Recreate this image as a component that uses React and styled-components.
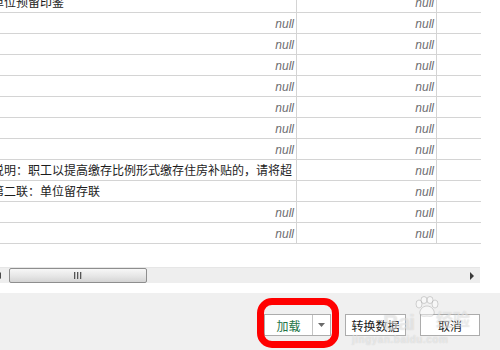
import React from "react";
import styled, { createGlobalStyle } from "styled-components";

const GlobalStyle = createGlobalStyle`
  html, body { margin: 0; padding: 0; background: #ffffff; }
  body { font-family: "Liberation Sans", "Noto Sans CJK SC", sans-serif; }
`;

const Page = styled.div`
  position: relative;
  width: 500px;
  height: 350px;
  overflow: hidden;
  display: flex;
  flex-direction: column;
  background: #ffffff;
`;

const GridArea = styled.div`
  height: 293px;
  display: flex;
  flex-direction: column;
  background: #ffffff;
`;

const GridViewport = styled.div`
  height: 267px;
  overflow: hidden;
`;

const Table = styled.div`
  display: grid;
  grid-template-columns: 308px 140px 44px;
  grid-auto-rows: 21px;
  margin-top: -8px;
  margin-left: -11px;
  width: 492px;
`;

const Cell = styled.div`
  box-sizing: border-box;
  border-bottom: 1px solid #d4d4d4;
  border-right: ${(p) => (p.$last ? "none" : "1px solid #d4d4d4")};
  display: flex;
  align-items: center;
  justify-content: ${(p) => (p.$text ? "flex-start" : "flex-end")};
  padding: ${(p) => (p.$text ? "0 0 0 3px" : "0 2px 0 0")};
  overflow: hidden;
  white-space: nowrap;
`;

const NullText = styled.span`
  font-family: "Liberation Sans", Arial, sans-serif;
  font-style: italic;
  font-size: 12px;
  color: #6c6c70;
  line-height: 20px;
  padding-top: 1px;
`;

const CnText = styled.span`
  font-family: "Noto Sans CJK SC", "Noto Sans", sans-serif;
  font-size: 12px;
  color: #1c1c1c;
  line-height: 20px;
`;

const HScroll = styled.div`
  box-sizing: border-box;
  width: 480px;
  height: 16px;
  background: #eeeeee;
  border-top: 1px solid #e6e6e6;
  display: flex;
  align-items: center;
`;

const ArrowLeft = styled.div`
  width: 9px;
  height: 15px;
  display: flex;
  align-items: center;
  overflow: hidden;
`;

const Thumb = styled.div`
  box-sizing: border-box;
  width: 138px;
  height: 15px;
  border: 1px solid #8e8e8e;
  border-radius: 2px;
  background: linear-gradient(#f7f7f7, #e6e6e6 55%, #d4d4d4);
  display: flex;
  align-items: center;
  justify-content: center;
`;

const Track = styled.div`
  flex: 1;
`;

const ArrowRight = styled.div`
  width: 16px;
  height: 15px;
  display: flex;
  align-items: center;
  justify-content: center;
`;

const Footer = styled.div`
  flex: 1;
  background: #f0f0f0;
  display: flex;
  justify-content: flex-end;
  align-items: flex-start;
  padding: 21px 20px 0 0;
  gap: 14px;
`;

const SplitButton = styled.div`
  box-sizing: border-box;
  height: 22px;
  display: flex;
  border: 1px solid #acacac;
  background: #ffffff;
`;

const SplitMain = styled.div`
  width: 47px;
  border-right: 1px solid #c4c4c4;
  display: flex;
  align-items: center;
  justify-content: center;
  font-family: "Noto Sans CJK SC", sans-serif;
  font-size: 12px;
  color: #227447;
`;

const SplitDrop = styled.div`
  width: 17px;
  display: flex;
  align-items: center;
  justify-content: center;
`;

const Button = styled.div`
  box-sizing: border-box;
  width: ${(p) => p.$w}px;
  height: 22px;
  border: 1px solid #acacac;
  background: #ffffff;
  display: flex;
  align-items: center;
  justify-content: center;
  font-family: "Noto Sans CJK SC", sans-serif;
  font-size: 12px;
  color: #1a1a1a;
`;

const RedMark = styled.div`
  position: absolute;
  left: 257px;
  top: 298px;
  width: 82px;
  height: 50px;
  box-sizing: border-box;
  border: 7px solid #ff0000;
  border-radius: 15px;
`;

const Watermark = styled.div`
  position: absolute;
  left: 350px;
  top: 294px;
  width: 125px;
  height: 56px;
  pointer-events: none;
  color: rgba(255, 255, 255, 0.45);
  text-shadow: 0 0 1px rgba(120, 120, 120, 0.3);
`;

const WmBrand = styled.div`
  position: absolute;
  left: 33px;
  top: 16px;
  font-family: "Liberation Sans", sans-serif;
  font-weight: bold;
  font-size: 22px;
  letter-spacing: -1px;
`;

const WmPaw = styled.svg`
  position: absolute;
  left: 63px;
  top: 2px;
`;

const WmCn = styled.div`
  position: absolute;
  left: 86px;
  top: 12px;
  font-family: "Noto Sans CJK SC", sans-serif;
  font-size: 17px;
  font-weight: bold;
`;

const WmUrl = styled.div`
  position: absolute;
  left: 2px;
  top: 40px;
  font-family: "Liberation Sans", sans-serif;
  font-size: 10px;
  font-weight: bold;
  letter-spacing: 0.5px;
`;

const rows = [
  ["单位预留印鉴", null, ""],
  [null, null, ""],
  [null, null, ""],
  [null, null, ""],
  [null, null, ""],
  [null, null, ""],
  [null, null, ""],
  [null, null, ""],
  ["说明：职工以提高缴存比例形式缴存住房补贴的，请将超", null, ""],
  ["第二联：单位留存联", null, ""],
  [null, null, ""],
  [null, null, ""],
];

function renderCell(v, ci) {
  const last = ci === 2;
  if (v === null) {
    return (
      <Cell key={ci} $last={last}>
        <NullText>null</NullText>
      </Cell>
    );
  }
  return (
    <Cell key={ci} $text $last={last}>
      <CnText>{v}</CnText>
    </Cell>
  );
}

export default function App() {
  return (
    <Page>
      <GlobalStyle />
      <GridArea>
        <GridViewport>
          <Table>
            {rows.map((r, ri) => (
              <React.Fragment key={ri}>{r.map((v, ci) => renderCell(v, ci))}</React.Fragment>
            ))}
          </Table>
        </GridViewport>
        <HScroll>
          <ArrowLeft>
            <svg width="9" height="15" viewBox="0 0 9 15">
              <polygon points="-3,7.5 1,4 1,11" fill="#4a4a4a" />
            </svg>
          </ArrowLeft>
          <Thumb>
            <svg width="9" height="7" viewBox="0 0 9 7">
              <rect x="0" y="0" width="1" height="7" fill="#555" />
              <rect x="1" y="0" width="1" height="7" fill="#bbb" />
              <rect x="3" y="0" width="1" height="7" fill="#555" />
              <rect x="4" y="0" width="1" height="7" fill="#bbb" />
              <rect x="6" y="0" width="1" height="7" fill="#555" />
              <rect x="7" y="0" width="1" height="7" fill="#bbb" />
            </svg>
          </Thumb>
          <Track />
          <ArrowRight>
            <svg width="5" height="8" viewBox="0 0 5 8">
              <polygon points="0,0 4,4 0,8" fill="#3a3a3a" />
            </svg>
          </ArrowRight>
        </HScroll>
      </GridArea>
      <Footer>
        <SplitButton>
          <SplitMain>加载</SplitMain>
          <SplitDrop>
            <svg width="7" height="4" viewBox="0 0 7 4">
              <polygon points="0,0 7,0 3.5,4" fill="#6a6a6a" />
            </svg>
          </SplitDrop>
        </SplitButton>
        <Button $w={61}>转换数据</Button>
        <Button $w={60}>取消</Button>
      </Footer>
      <Watermark>
        <WmPaw width="28" height="22" viewBox="0 0 28 22">
          <g fill="rgba(255,255,255,0.45)" stroke="rgba(120,120,120,0.3)" strokeWidth="1">
            <ellipse cx="6" cy="8" rx="3" ry="4" />
            <ellipse cx="11" cy="4" rx="3" ry="3.5" />
            <ellipse cx="17" cy="4" rx="3" ry="3.5" />
            <ellipse cx="22" cy="8" rx="3" ry="4" />
            <path d="M14 10 C9 10 6 15 7 18 C8 21 12 20 14 20 C16 20 20 21 21 18 C22 15 19 10 14 10 Z" />
          </g>
        </WmPaw>
        <WmBrand>Bai</WmBrand>
        <WmCn>经验</WmCn>
        <WmUrl>jingyan.baidu.com</WmUrl>
      </Watermark>
      <RedMark />
    </Page>
  );
}
